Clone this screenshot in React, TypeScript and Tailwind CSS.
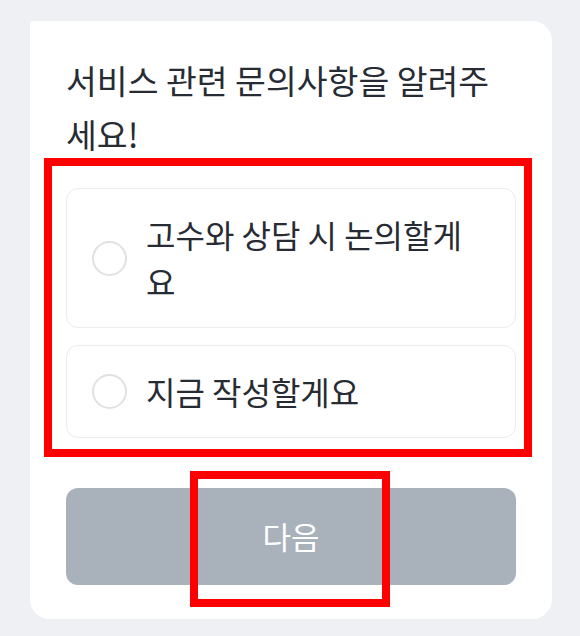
import { useState } from 'react';

const options = ['고수와 상담 시 논의할게요', '지금 작성할게요'];

export default function App() {
  const [selected, setSelected] = useState<number | null>(null);

  return (
    <div
      className="relative min-h-screen bg-[#eef0f4] pt-[21px] pl-[30px]"
      style={{ fontFamily: '"Noto Sans CJK KR", "Noto Sans", sans-serif' }}
    >
      <div className="w-[522px] rounded-[20px] rounded-tl-sm bg-white px-9 pt-8 pb-[34px]">
        <h1 className="text-[33.5px] leading-[54px] font-normal text-[#272b33]">
          서비스 관련 문의사항을 알려주세요!
        </h1>

        <div className="mt-[27px] flex flex-col gap-[17px]">
          {options.map((label, i) => (
            <button
              key={label}
              onClick={() => setSelected(i)}
              className="flex items-center gap-[19px] rounded-xl border border-[#ececee] bg-white py-[22px] pl-[25px] pr-6 text-left"
            >
              <span
                className={`h-[35px] w-[35px] shrink-0 rounded-full border-2 ${
                  selected === i ? 'border-[#00c7ae]' : 'border-[#e1e1e3]'
                }`}
              />
              <span className="text-[32px] leading-[47px] font-normal text-[#272b33]">{label}</span>
            </button>
          ))}
        </div>

        <button className="mt-[50px] flex h-[97px] w-full items-center justify-center rounded-xl bg-[#a9b1bb] text-[31px] font-normal text-white">
          다음
        </button>
      </div>

      {/* annotation boxes */}
      <div className="pointer-events-none absolute left-[44px] top-[158px] h-[299px] w-[488px] border-8 border-[#ff0000]" />
      <div className="pointer-events-none absolute left-[190px] top-[471px] h-[136px] w-[200px] border-8 border-[#ff0000]" />
    </div>
  );
}
